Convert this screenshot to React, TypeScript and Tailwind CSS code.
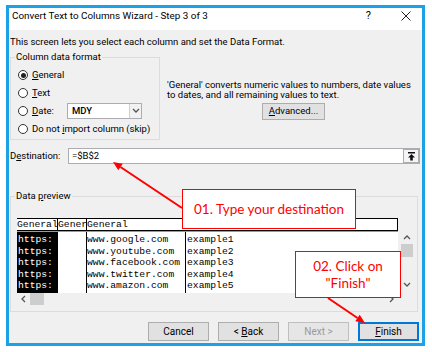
import React from 'react';

const rows = [
  ['www.google.com', 'example1'],
  ['www.youtube.com', 'example2'],
  ['www.facebook.com', 'example3'],
  ['www.twitter.com', 'example4'],
  ['www.amazon.com', 'example5'],
];

const Radio = ({ checked, children }: { checked?: boolean; children: React.ReactNode }) => (
  <div className="h-[18px] flex items-center gap-[4px]">
    <span className="w-[10px] h-[10px] rounded-full border border-[#333] bg-white flex items-center justify-center">
      {checked && <span className="w-[5px] h-[5px] rounded-full bg-[#222]" />}
    </span>
    {children}
  </div>
);

const Chevron = ({ dir, className }: { dir: 'up' | 'down' | 'left' | 'right'; className?: string }) => {
  const pts = {
    up: '1,5 4,2 7,5',
    down: '1,2 4,5 7,2',
    left: '5,1 2,4 5,7',
    right: '3,1 6,4 3,7',
  }[dir];
  return (
    <svg width="8" height="8" viewBox="0 0 8 8" className={className}>
      <polyline points={pts} fill="none" stroke="#555" strokeWidth="1.3" />
    </svg>
  );
};

const Btn = ({ children, primary, disabled }: { children: React.ReactNode; primary?: boolean; disabled?: boolean }) => (
  <div
    className={
      'w-[61px] h-[19px] flex items-center justify-center text-[10px] ' +
      (primary
        ? 'border-2 border-[#0078d7] bg-[#e1e1e1]'
        : disabled
        ? 'border border-[#bfbfbf] bg-[#e6e6e6] text-[#9a9a9a]'
        : 'border border-[#adadad] bg-[#e1e1e1]')
    }
  >
    {children}
  </div>
);

export default function App() {
  return (
    <div className="relative w-[432px] h-[352px] bg-white pt-[5px] pl-[6px] font-['Roboto',sans-serif] text-black text-[9.5px]">
      <div className="w-[419px] h-[341px] border-[3px] border-[#1aa1e6] bg-[#f0f0f0] flex flex-col">
        {/* title bar */}
        <div className="h-[22px] shrink-0 bg-white flex items-start pl-[3px] pr-[11px]">
          <span className="text-[9.9px] leading-[16px]">Convert Text to Columns Wizard - Step 3 of 3</span>
          <span className="ml-auto text-[11px] leading-[16px]">?</span>
          <svg width="10" height="10" viewBox="0 0 10 10" className="ml-[30px] mt-[3px]">
            <path d="M0.5 0.5 L9.5 9.5 M9.5 0.5 L0.5 9.5" stroke="#222" strokeWidth="1" />
          </svg>
        </div>

        <div className="mt-[5px] pl-[1px] leading-[14px]">
          This screen lets you select each column and set the Data Format.
        </div>

        {/* format group + info */}
        <div className="mt-[8px] flex">
          <div className="ml-[1px] w-[150px] h-[83px] border border-[#dcdcdc] pl-[7px]">
            <span className="block w-fit -mt-[8px] -ml-[3px] px-[1px] bg-[#f0f0f0] leading-[14px]">Column data format</span>
            <div className="mt-[2px]">
              <Radio checked>
                <span><span className="underline">G</span>eneral</span>
              </Radio>
              <Radio>
                <span><span className="underline">T</span>ext</span>
              </Radio>
              <Radio>
                <span className="w-[31px]"><span className="underline">D</span>ate:</span>
                <div className="w-[75px] h-[16px] border border-[#abadb3] bg-white flex">
                  <span className="flex-1 pl-[4px] leading-[14px] font-medium">MDY</span>
                  <span className="w-[12px] bg-[#f2f2f2] border-l border-[#d0d0d0] flex items-center justify-center">
                    <Chevron dir="down" />
                  </span>
                </div>
              </Radio>
              <Radio>
                <span>Do not <span className="underline">i</span>mport column (skip)</span>
              </Radio>
            </div>
          </div>

          <div className="ml-[7px] w-[253px] flex flex-col">
            <div className="mt-[23px] leading-[10px] whitespace-nowrap">
              'General' converts numeric values to numbers, date values
              <br />
              to dates, and all remaining values to text.
            </div>
            <div className="mt-[3px] flex justify-center">
              <div className="w-[63px] h-[17px] border border-[#adadad] bg-[#e1e1e1] flex items-center justify-center">
                <span><span className="underline">A</span>dvanced...</span>
              </div>
            </div>
          </div>
        </div>

        {/* destination */}
        <div className="mt-[8px] flex h-[16px] items-center pr-[2px]">
          <span className="w-[59px] pl-[1px]">D<span className="underline">e</span>stination:</span>
          <div className="flex-1 h-[16px] border border-[#abadb3] bg-white flex items-center">
            <span className="pl-[3px]">=$B$2</span>
            <span className="ml-auto w-[16px] h-[14px] border border-[#adadad] bg-[#f5f5f5] flex items-center justify-center">
              <svg width="9" height="9" viewBox="0 0 9 9">
                <path d="M1 0.75 H8" stroke="#111" strokeWidth="1.5" />
                <path d="M4.5 2 L1 5.5 H3.2 V8.5 H5.8 V5.5 H8 Z" fill="#111" />
              </svg>
            </span>
          </div>
        </div>

        {/* data preview */}
        <div className="mt-[32px] ml-[1px] w-[408px] h-[116px] border border-[#dcdcdc] pl-[6px]">
          <span className="block w-fit -mt-[8px] -ml-[2px] px-[1px] bg-[#f0f0f0] leading-[14px]">
            Data <span className="underline">p</span>review
          </span>
          <div className="mt-[15px] w-[381px] font-['Liberation_Mono',monospace] text-[9.7px]">
            <div className="h-[13px] grid grid-cols-[41px_29px_99px_1fr] border-t border-b border-r border-black bg-white items-end leading-[11px]">
              <span className="border-r border-black h-full flex items-end">General</span>
              <span className="border-r border-black h-full flex items-end overflow-hidden">Gener</span>
              <span className="h-full flex items-end">General</span>
              <span />
            </div>
          </div>
          <div className="flex">
            <div className="w-[381px] h-[62px] grid grid-cols-[41px_29px_99px_1fr] bg-white font-['Liberation_Mono',monospace] text-[9.7px] border-t border-[#9a9a9a]">
              <div className="bg-black text-white pt-[2px] pl-[1px]">
                {rows.map((r) => (
                  <div key={r[0]} className="h-[11.6px] leading-[11.6px]">https:</div>
                ))}
              </div>
              <div className="border-r border-black" />
              <div className="border-r border-black pt-[2px]">
                {rows.map((r) => (
                  <div key={r[0]} className="h-[11.6px] leading-[11.6px]">{r[0]}</div>
                ))}
              </div>
              <div className="pt-[2px] pl-[1px]">
                {rows.map((r) => (
                  <div key={r[1]} className="h-[11.6px] leading-[11.6px]">{r[1]}</div>
                ))}
              </div>
            </div>
            <div className="w-[15px] h-[62px] flex flex-col items-center pl-[2px]">
              <Chevron dir="up" className="mt-[3px]" />
              <div className="w-[12px] h-[13px] bg-[#cdcdcd] mt-[2px]" />
              <Chevron dir="down" className="mt-auto mb-[4px]" />
            </div>
          </div>
          <div className="w-[381px] h-[12px] flex items-center">
            <Chevron dir="left" className="ml-[3px]" />
            <div className="ml-[2px] w-[14px] h-[12px] bg-[#cdcdcd]" />
            <Chevron dir="right" className="ml-auto mr-[3px]" />
          </div>
        </div>

        {/* buttons */}
        <div className="mt-[10px] flex justify-end gap-[9px] pr-[3px]">
          <Btn>Cancel</Btn>
          <Btn>
            <span>&lt; <span className="underline">B</span>ack</span>
          </Btn>
          <Btn disabled>Next &gt;</Btn>
          <Btn primary>
            <span><span className="underline">F</span>inish</span>
          </Btn>
        </div>
      </div>

      {/* callouts */}
      <div className="absolute left-[182px] top-[189px] w-[174px] h-[40px] border-[1.5px] border-[#ff0000] bg-white flex items-center justify-center font-['Lato',sans-serif] text-[13.5px] text-[#ff0000]">
        01. Type your destination
      </div>
      <div className="absolute left-[295px] top-[251px] w-[106px] h-[47px] border-[1.5px] border-[#ff0000] bg-white flex flex-col items-center justify-center font-['Lato',sans-serif] text-[13.5px] leading-[17px] text-[#ff0000]">
        <span>02. Click on</span>
        <span>"Finish"</span>
      </div>

      <svg className="absolute left-0 top-0 pointer-events-none" width="432" height="352">
        <line x1="182" y1="208" x2="120.5" y2="167" stroke="#ff0000" strokeWidth="2" />
        <polygon points="113,162 122.7,163.7 118.3,170.3" fill="#ff0000" />
        <line x1="328" y1="298" x2="357.5" y2="318" stroke="#ff0000" strokeWidth="2" />
        <polygon points="365,323 355.3,321.3 359.7,314.7" fill="#ff0000" />
      </svg>
    </div>
  );
}
